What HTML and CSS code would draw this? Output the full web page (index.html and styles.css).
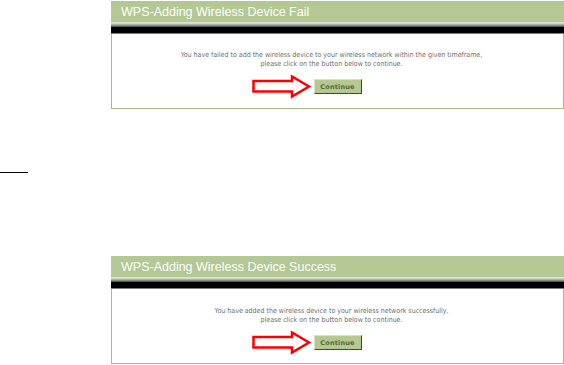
FILE: index.html
```html
<!DOCTYPE html>
<html lang="en">
<head>
    <meta charset="UTF-8">
    <meta name="viewport" content="width=device-width, initial-scale=1.0">
    <title>WPS - Adding Wireless Device</title>
    <link rel="stylesheet" href="styles.css">
</head>
<body>
    <div class="panel panel-fail">
        <div class="panel-head">WPS-Adding Wireless Device Fail</div>
        <div class="panel-fade"></div>
        <div class="panel-bar"></div>
        <div class="panel-body">
            <p class="msg">You have failed to add the wireless device to your wireless network within the given timeframe,<br>please click on the button below to continue.</p>
            <div class="btn-row">
                <span class="btn-wrap">
                    <svg class="arrow" width="60" height="24" viewBox="0 0 60 24"><polygon points="1.5,6 40,6 40,1.5 57,11.5 40,21.5 40,16.5 1.5,16.5" fill="#fff" stroke="#f00" stroke-width="2.5"/></svg>
                    <button class="btn">Continue</button>
                </span>
            </div>
        </div>
    </div>

    <div class="spacer"><span class="rule"></span></div>

    <div class="panel panel-ok">
        <div class="panel-head">WPS-Adding Wireless Device Success</div>
        <div class="panel-fade"></div>
        <div class="panel-bar"></div>
        <div class="panel-body">
            <p class="msg">You have added the wireless device to your wireless network successfully,<br>please click on the button below to continue.</p>
            <div class="btn-row">
                <span class="btn-wrap">
                    <svg class="arrow" width="60" height="24" viewBox="0 0 60 24"><polygon points="1.5,6 40,6 40,1.5 57,11.5 40,21.5 40,16.5 1.5,16.5" fill="#fff" stroke="#f00" stroke-width="2.5"/></svg>
                    <button class="btn">Continue</button>
                </span>
            </div>
        </div>
    </div>
</body>
</html>
```

FILE: styles.css
```css
body {
    margin: 0;
    padding-top: 1px;
    background: #fff;
    font-family: "Liberation Sans", Arial, sans-serif;
}
.panel {
    margin-left: 111px;
    width: 453px;
}
.panel-head {
    height: 21px;
    line-height: 22px;
    padding-left: 10px;
    background: #b3c893;
    color: #fff;
    font-size: 12.5px;
}
.panel-fade {
    height: 5px;
    background: linear-gradient(#e4ebd8, #d0d6c4 30%, #8a8a8a 70%, #444);
}
.panel-bar {
    height: 6px;
    background: #000;
    border-bottom: 1px solid #7d7d7d;
}
.panel-body {
    height: 57px;
    padding-top: 17px;
    border: 1px solid #a9bc87;
    border-top: none;
}
.panel-ok .panel-body {
    height: 56px;
    padding-top: 18px;
}
.msg {
    margin: 0;
    padding-right: 12px;
    text-align: center;
    color: #6e6e6e;
    font-family: Tahoma, "DejaVu Sans Condensed", "Liberation Sans", sans-serif;
    font-size: 7px;
    line-height: 9px;
}
.btn-row {
    display: flex;
    justify-content: center;
    margin-top: 10px;
}
.btn-wrap {
    position: relative;
}
.arrow {
    position: absolute;
    right: 100%;
    top: -4px;
    margin-right: 2px;
}
.btn {
    display: block;
    width: 48px;
    height: 15px;
    padding: 0;
    background: #b4c890;
    border: 1px solid;
    border-color: #d8e2c6 #3e4a2a #3e4a2a #d8e2c6;
    color: #56663a;
    font-family: "DejaVu Sans", sans-serif;
    font-weight: bold;
    font-size: 6.5px;
    letter-spacing: 0.2px;
}
.spacer {
    height: 147px;
    padding-top: 63px;
    box-sizing: border-box;
}
.rule {
    display: block;
    width: 28px;
    height: 1px;
    background: #000;
}
```
